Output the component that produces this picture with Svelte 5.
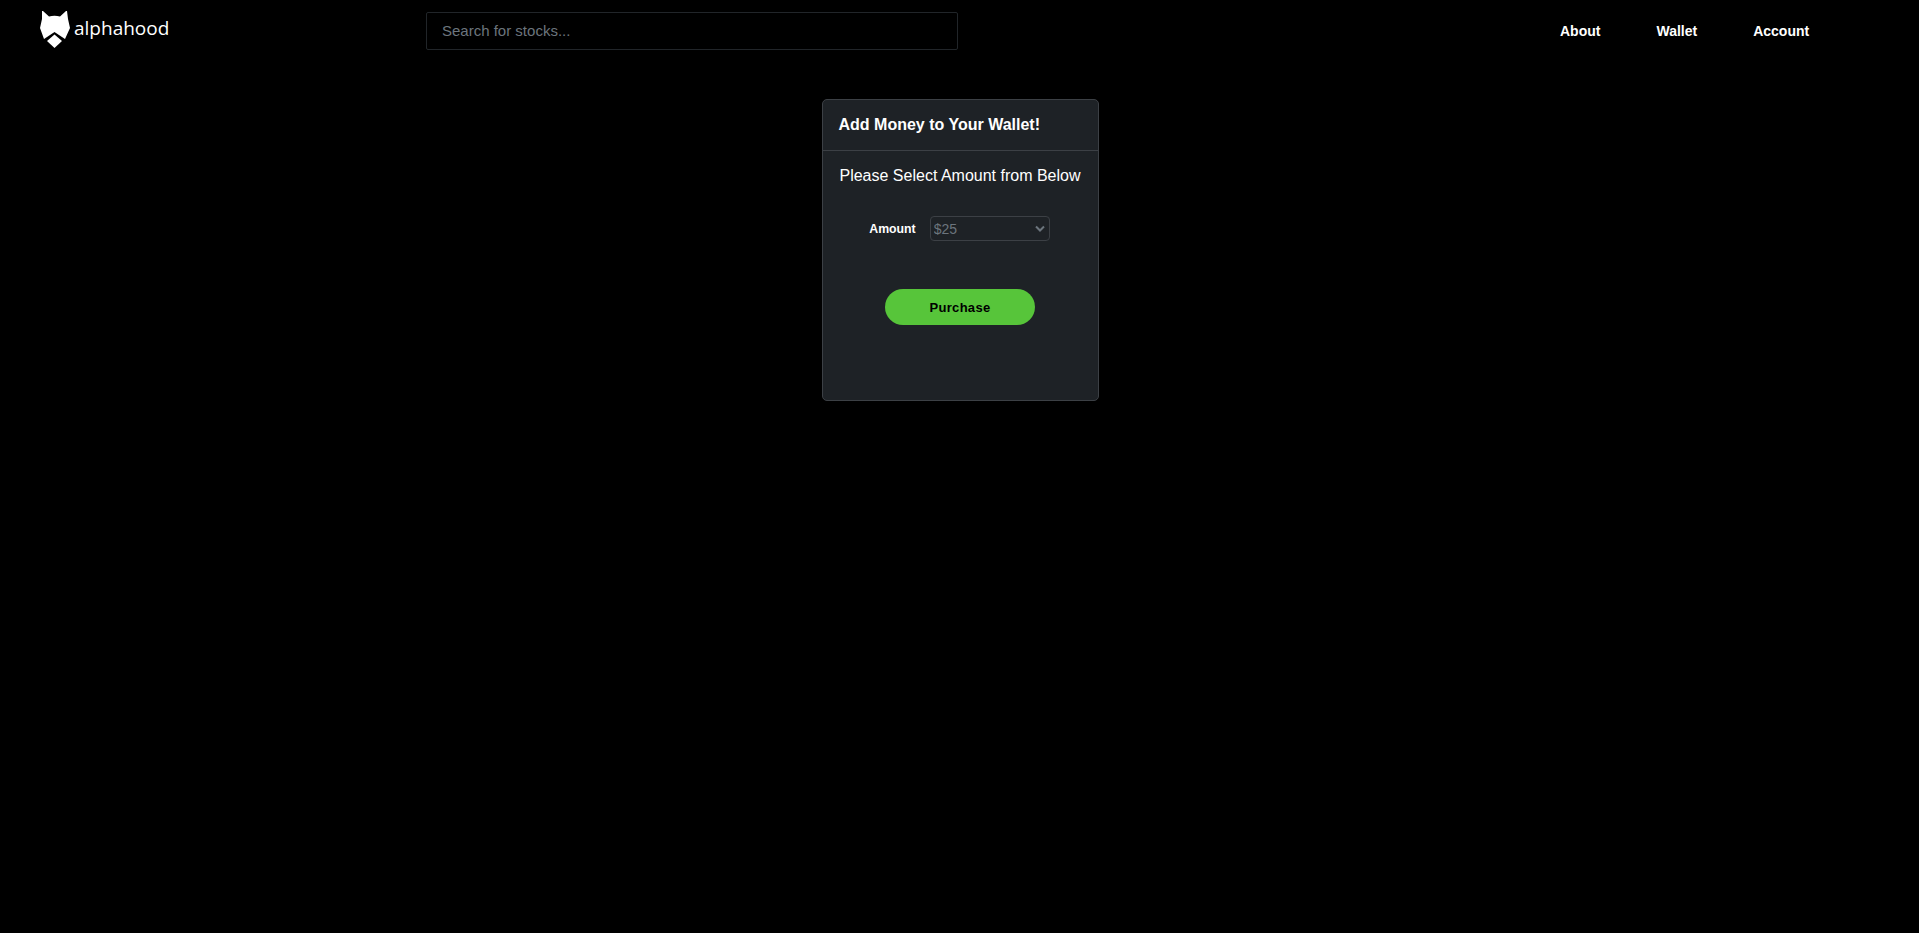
<script>
  let query = $state('');
  let amount = $state('25');
  const amounts = ['25', '50', '100', '250'];
  const links = ['About', 'Wallet', 'Account'];
</script>

<svelte:head>
  <title>Alphahood — Wallet</title>
</svelte:head>

<div class="page">
  <header class="nav">
    <a href="/" class="brand">
      <svg class="logo" viewBox="0 0 30 38" width="30" height="38" aria-hidden="true">
        <path d="M2 1 L3 1 L9 6.500 Q14.500 5 20 6.500 L26 1 L27 1 L28 9 L30 18 L25 29 L14.500 22 L4 29 L0 18 L2 9 Z" fill="#fff" />
        <path d="M14.500 24.500 L22 31 L14.500 38 L7 31 Z" fill="#fff" />
      </svg>
      <span class="brand-name">alphahood</span>
    </a>
    <input class="search" type="text" placeholder="Search for stocks..." bind:value={query} />
    <nav class="links">
      {#each links as link}
        <a href="/{link.toLowerCase()}">{link}</a>
      {/each}
    </nav>
  </header>

  <main class="main">
    <section class="card">
      <h2 class="card-header">Add Money to Your Wallet!</h2>
      <div class="card-body">
        <p class="prompt">Please Select Amount from Below</p>
        <div class="field">
          <label for="amount">Amount</label>
          <div class="select-wrap">
            <select id="amount" bind:value={amount}>
              {#each amounts as a}
                <option value={a}>${a}</option>
              {/each}
            </select>
            <svg class="chevron" viewBox="0 0 10 7" width="10" height="7" aria-hidden="true">
              <path d="M1 1.500 L5 5.500 L9 1.500" fill="none" stroke="#6c757d" stroke-width="2" />
            </svg>
          </div>
        </div>
        <button class="purchase" type="button">Purchase</button>
      </div>
    </section>
  </main>
</div>

<style>
  :global(body) {
    background: #000;
  }

  .page {
    min-height: 933px;
    background: #000;
    color: #fff;
    font-family: 'Liberation Sans', Arial, sans-serif;
  }

  .nav {
    display: flex;
    align-items: center;
    height: 61px;
    padding-left: 40px;
  }

  .brand {
    display: flex;
    align-items: center;
    gap: 4px;
    width: 386px;
    margin-bottom: 4px;
    color: #fff;
    text-decoration: none;
  }

  .logo {
    flex: none;
  }

  .brand-name {
    margin-bottom: 2px;
    font-family: 'Open Sans', sans-serif;
    font-size: 19px;
    font-weight: 400;
  }

  .search {
    box-sizing: border-box;
    width: 532px;
    height: 38px;
    padding: 0 15px;
    background: #000;
    border: 1px solid #212529;
    border-radius: 2px;
    color: #fff;
    font-family: inherit;
    font-size: 15px;
    outline: none;
  }

  .search::placeholder {
    color: #6c757d;
    opacity: 1;
  }

  .links {
    display: flex;
    gap: 56px;
    margin-left: 602px;
    padding-top: 1px;
  }

  .links a {
    color: #fff;
    font-size: 14px;
    font-weight: 700;
    text-decoration: none;
  }

  .main {
    display: flex;
    justify-content: center;
    padding: 38px 0 0 1px;
  }

  .card {
    box-sizing: border-box;
    width: 277px;
    height: 302px;
    background: #1e2226;
    border: 1px solid #3c4045;
    border-radius: 5px;
  }

  .card-header {
    box-sizing: border-box;
    height: 51px;
    margin: 0;
    padding: 16px 16px 0;
    border-bottom: 1px solid #3c4045;
    font-size: 16px;
    font-weight: 700;
  }

  .card-body {
    display: flex;
    flex-direction: column;
    align-items: center;
  }

  .prompt {
    margin: 15px 0 0;
    font-size: 16px;
    line-height: 20px;
  }

  .field {
    display: flex;
    align-items: center;
    gap: 14px;
    margin-top: 30px;
    margin-right: 1px;
  }

  label {
    font-size: 12.300px;
    font-weight: 700;
  }

  .select-wrap {
    position: relative;
    display: flex;
  }

  select {
    box-sizing: border-box;
    width: 120px;
    height: 25px;
    padding: 0 3px;
    appearance: none;
    background: #1e2226;
    border: 1px solid #3c4045;
    border-radius: 4px;
    color: #6c757d;
    font-family: inherit;
    font-size: 14px;
    outline: none;
  }

  .chevron {
    position: absolute;
    top: 9px;
    right: 5px;
    pointer-events: none;
  }

  .purchase {
    width: 150px;
    height: 36px;
    margin-top: 48px;
    background: #57c53a;
    border: none;
    border-radius: 18px;
    color: #000;
    font-family: inherit;
    font-size: 13px;
    font-weight: 700;
    letter-spacing: 0.3px;
  }
</style>
